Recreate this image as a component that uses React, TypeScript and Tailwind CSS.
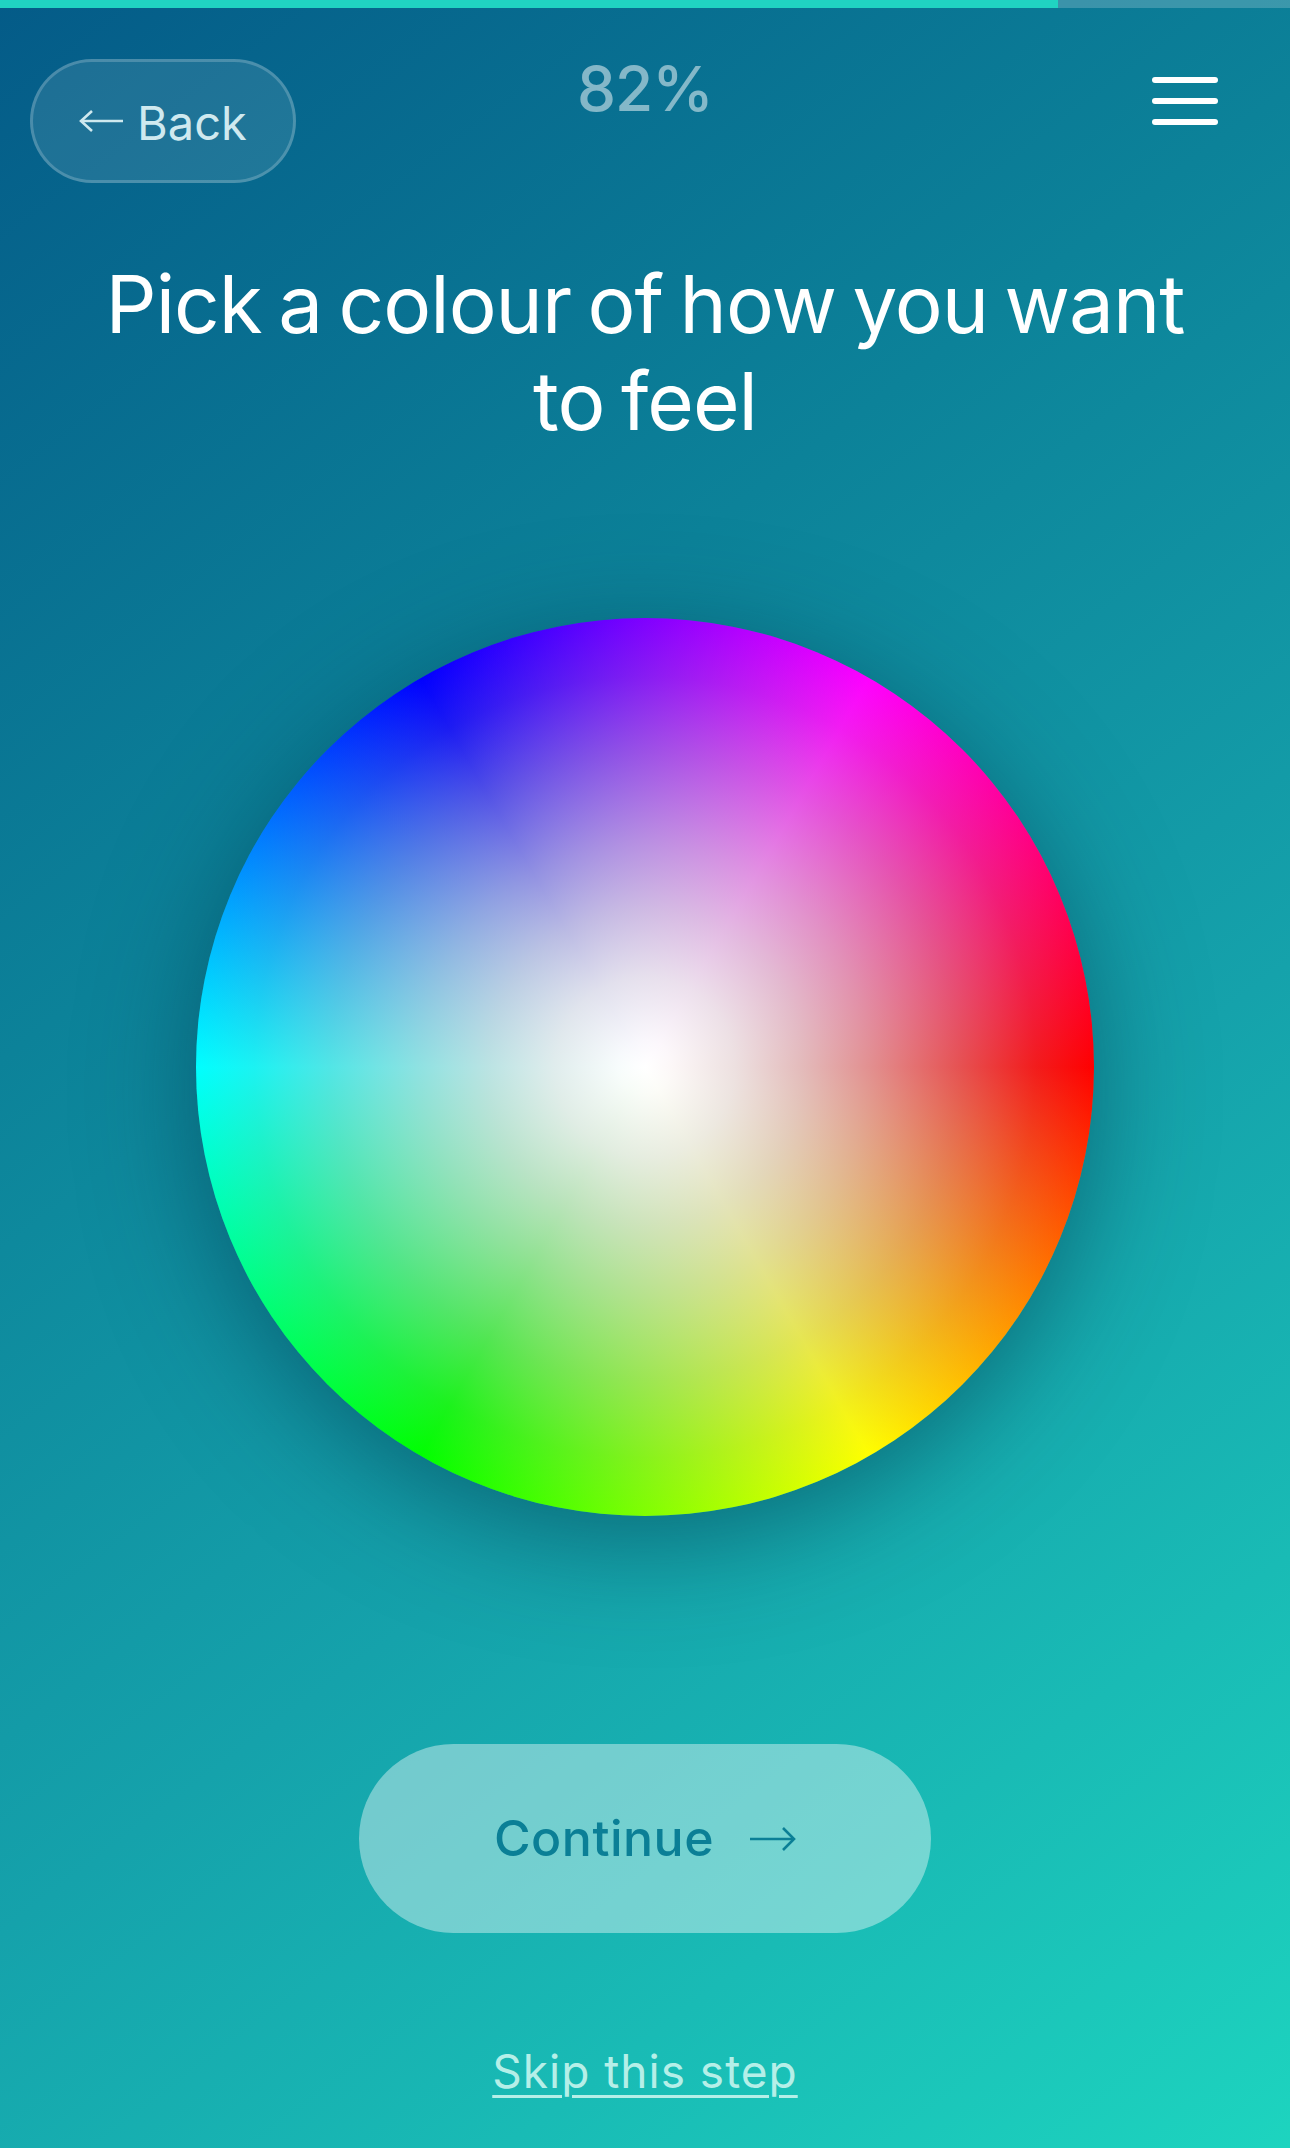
function ArrowLeft() {
  return (
    <svg width="44" height="24" viewBox="0 0 44 24" fill="none" stroke="currentColor" strokeWidth="2.6">
      <path d="M44 12H2" />
      <path d="M13 2L2 12l11 10" />
    </svg>
  );
}

function ArrowRight() {
  return (
    <svg width="46" height="26" viewBox="0 0 46 26" fill="none" stroke="currentColor" strokeWidth="2.6">
      <path d="M0 13h44" />
      <path d="M33 2l11 11-11 11" />
    </svg>
  );
}

export default function App() {
  return (
    <div className="w-[1290px] h-[2148px] overflow-hidden flex flex-col items-stretch bg-[linear-gradient(143deg,#045b88_0%,#0c8299_34%,#15a2ab_62%,#1dd4bf_100%)] font-['Inter',sans-serif]">
      <div className="h-2 bg-white/20">
        <div className="h-full w-[1058px] bg-[#20d3c2]" />
      </div>

      <header className="grid grid-cols-[1fr_auto_1fr] px-[30px]">
        <button className="mt-[51px] w-[266px] h-[124px] flex items-center justify-center gap-[14px] rounded-[62px] bg-white/10 border-[3px] border-white/20 text-[#cfe9ef]">
          <ArrowLeft />
          <span className="text-[47px] pt-1">Back</span>
        </button>
        <div className="mt-[45px] text-[62px] leading-[72px] font-medium tracking-[-1px] text-white/50">82%</div>
        <div className="mt-[69px] mr-[42px] flex flex-col gap-[15px] justify-self-end">
          <span className="block w-[66px] h-[6px] rounded-sm bg-white" />
          <span className="block w-[66px] h-[6px] rounded-sm bg-white" />
          <span className="block w-[66px] h-[6px] rounded-sm bg-white" />
        </div>
      </header>

      <h1 className="mt-[72px] text-center text-white text-[80px] leading-[97px] font-normal tracking-[-1px] [word-spacing:-5px]">
        Pick a colour of how you want
        <br />
        to feel
      </h1>

      <div className="mt-[169px] mx-auto w-[898px] h-[898px] rounded-full shadow-[0_24px_110px_rgba(0,50,70,0.5)] bg-[radial-gradient(circle_closest-side,#ffffff_0%,rgba(252,252,252,0.98)_6%,rgba(236,236,236,0.95)_20%,rgba(222,222,222,0.84)_35%,rgba(212,212,212,0.68)_50%,rgba(195,195,195,0.42)_70%,rgba(175,175,175,0.16)_87%,rgba(170,170,170,0)_100%),conic-gradient(from_30deg,#ff00ff,#ff0000,#ffff00,#00ff00,#00ffff,#0000ff,#ff00ff)]" />

      <button className="mt-[228px] mx-auto w-[572px] h-[189px] rounded-full bg-white/40 flex items-center justify-center gap-9 text-[#0b7f96]">
        <span className="text-[50px] font-medium tracking-[0.5px]">Continue</span>
        <ArrowRight />
      </button>

      <a className="mt-[110px] mx-auto text-[46px] leading-[56px] tracking-[1px] text-[#b5efe8] underline underline-offset-[7px] decoration-[3px]">
        Skip this step
      </a>
    </div>
  );
}
